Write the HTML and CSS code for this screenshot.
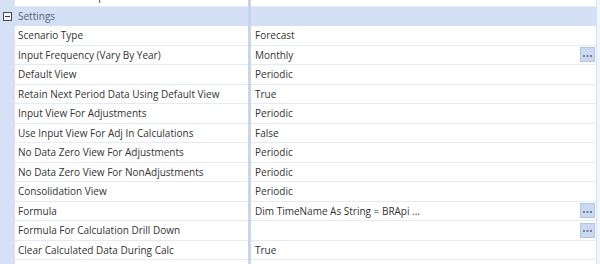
FILE: index.html
```html
<!DOCTYPE html>
<html lang="en">
<head>
    <meta charset="UTF-8">
    <title>Scenario Properties</title>
    <link rel="stylesheet" href="styles.css">
</head>
<body>
    <div class="grid">
        <div class="gutter"></div><div class="name">Number Of No Input Periods Per Workflow Unit</div><div class="split"></div><div class="value">0</div><div class="edge"></div>

        <div class="cat">
            <svg class="toggle" width="9" height="9" viewBox="0 0 9 9"><rect x="0.5" y="0.5" width="8" height="8" fill="#f2f5fb" stroke="#4a4a4a"/><rect x="2" y="4" width="5" height="1" fill="#3a3a3a"/></svg>
            <span>Settings</span>
        </div><div class="split cat-split"></div><div class="cat cat-rest"></div><div class="edge"></div>

        <div class="gutter"></div><div class="name">Scenario Type</div><div class="split"></div><div class="value">Forecast</div><div class="edge"></div>
        <div class="gutter"></div><div class="name">Input Frequency (Vary By Year)</div><div class="split"></div><div class="value">Monthly<span class="dots"><svg width="9" height="2" viewBox="0 0 9 2"><rect x="0" y="0" width="2" height="2"/><rect x="3.5" y="0" width="2" height="2"/><rect x="7" y="0" width="2" height="2"/></svg></span></div><div class="edge"></div>
        <div class="gutter"></div><div class="name">Default View</div><div class="split"></div><div class="value">Periodic</div><div class="edge"></div>
        <div class="gutter"></div><div class="name">Retain Next Period Data Using Default View</div><div class="split"></div><div class="value">True</div><div class="edge"></div>
        <div class="gutter"></div><div class="name">Input View For Adjustments</div><div class="split"></div><div class="value">Periodic</div><div class="edge"></div>
        <div class="gutter"></div><div class="name">Use Input View For Adj In Calculations</div><div class="split"></div><div class="value">False</div><div class="edge"></div>
        <div class="gutter"></div><div class="name">No Data Zero View For Adjustments</div><div class="split"></div><div class="value">Periodic</div><div class="edge"></div>
        <div class="gutter"></div><div class="name">No Data Zero View For NonAdjustments</div><div class="split"></div><div class="value">Periodic</div><div class="edge"></div>
        <div class="gutter"></div><div class="name">Consolidation View</div><div class="split"></div><div class="value">Periodic</div><div class="edge"></div>
        <div class="gutter"></div><div class="name">Formula</div><div class="split"></div><div class="value">Dim TimeName As String = BRApi ...<span class="dots"><svg width="9" height="2" viewBox="0 0 9 2"><rect x="0" y="0" width="2" height="2"/><rect x="3.5" y="0" width="2" height="2"/><rect x="7" y="0" width="2" height="2"/></svg></span></div><div class="edge"></div>
        <div class="gutter"></div><div class="name">Formula For Calculation Drill Down</div><div class="split"></div><div class="value"><span class="dots"><svg width="9" height="2" viewBox="0 0 9 2"><rect x="0" y="0" width="2" height="2"/><rect x="3.5" y="0" width="2" height="2"/><rect x="7" y="0" width="2" height="2"/></svg></span></div><div class="edge"></div>
        <div class="gutter"></div><div class="name">Clear Calculated Data During Calc</div><div class="split"></div><div class="value">True</div><div class="edge"></div>
        <div class="gutter"></div><div class="name">Use Two Pass Elimination</div><div class="split"></div><div class="value">False</div><div class="edge"></div>
    </div>
</body>
</html>
```

FILE: styles.css
```css
body {
    margin: 0;
    background: #ffffff;
    font-family: 'Open Sans', 'Noto Sans', sans-serif;
    font-size: 10px;
    color: #333333;
    overflow: hidden;
}
.grid {
    display: grid;
    grid-template-columns: 15px 233px 3px 345px 4px;
    grid-auto-rows: 19.5px;
    margin-top: -13px;
}
.gutter {
    background: #d6e1f5;
}
.name,
.value {
    display: flex;
    align-items: center;
    border-bottom: 1px solid #e4ebf7;
    white-space: nowrap;
    overflow: hidden;
}
.name {
    padding-left: 3px;
}
.value {
    padding-left: 4px;
    padding-right: 1px;
}
.split {
    background: #c9d5eb;
}
.edge {
    background: #f3f6fc;
    border-left: 1px solid #d6e1f5;
}
.cat {
    grid-column: 1 / 3;
    display: flex;
    align-items: center;
    background: #d4e0f5;
    color: #5a6478;
}
.cat .toggle {
    margin: 0 6px 0 3px;
}
.cat-split {
    background: #c6d3ec;
}
.cat.cat-rest {
    grid-column: auto;
}
.dots {
    margin-left: auto;
    width: 15px;
    height: 15px;
    flex: none;
    display: flex;
    align-items: center;
    justify-content: center;
    padding-top: 2px;
    box-sizing: border-box;
    background: #cbd8f1;
    border: 1px solid #b3c5e7;
}
.dots svg {
    fill: #7a7f8a;
}
```
